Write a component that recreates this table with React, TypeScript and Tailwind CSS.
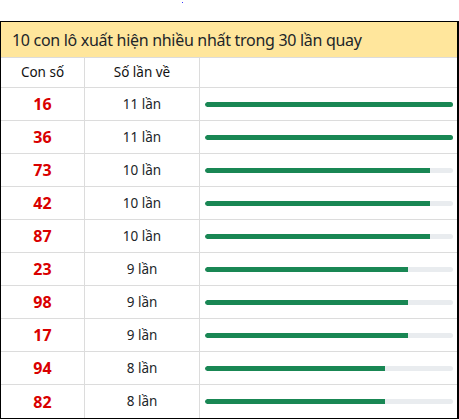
import React from "react";

const rows: [string, number][] = [
  ["16", 11],
  ["36", 11],
  ["73", 10],
  ["42", 10],
  ["87", 10],
  ["23", 9],
  ["98", 9],
  ["17", 9],
  ["94", 8],
  ["82", 8],
];

export default function App() {
  const max = 11;
  return (
    <div className="w-[459px] h-[420px] bg-white" style={{ fontFamily: '"Noto Sans", "Open Sans", sans-serif' }}>
      <div className="h-[21px] pl-[182px] pt-[2px]">
        <div className="w-[1px] h-[1px] bg-[#3a3aff]" />
      </div>
      <div className="w-[459px] border border-black border-r-2">
        <div className="h-[36px] bg-[#ffe69c] border-b border-[#dcdcdc] flex items-center pl-[11px] text-[16px] tracking-[-0.3px] text-[#212529]">
          10 con lô xuất hiện nhiều nhất trong 30 lần quay
        </div>
        <div className="flex h-[30px] border-b border-[#dcdcdc] text-[13.5px] text-[#111]">
          <div className="w-[84px] border-r border-[#dcdcdc] flex items-center justify-center">Con số</div>
          <div className="w-[115px] border-r border-[#dcdcdc] flex items-center justify-center">Số lần về</div>
          <div className="flex-1" />
        </div>
        {rows.map(([n, c], i) => (
          <div key={i} className="flex h-[33px] border-b border-[#dcdcdc] last:border-b-0">
            <div className="w-[84px] border-r border-[#dcdcdc] flex items-center justify-center text-[16px] font-bold text-[#d90000]">
              {n}
            </div>
            <div className="w-[115px] border-r border-[#dcdcdc] flex items-center justify-center text-[13.5px] text-[#212529]">
              {c} lần
            </div>
            <div className="flex-1 flex items-center pl-[5px] pr-[4px]">
              <div className="w-full h-[5px] bg-[#e9ecef] rounded-full overflow-hidden">
                <div className="h-full bg-[#198754] rounded-l-full" style={{ width: `${(c / max) * 100}%` }} />
              </div>
            </div>
          </div>
        ))}
      </div>
    </div>
  );
}
